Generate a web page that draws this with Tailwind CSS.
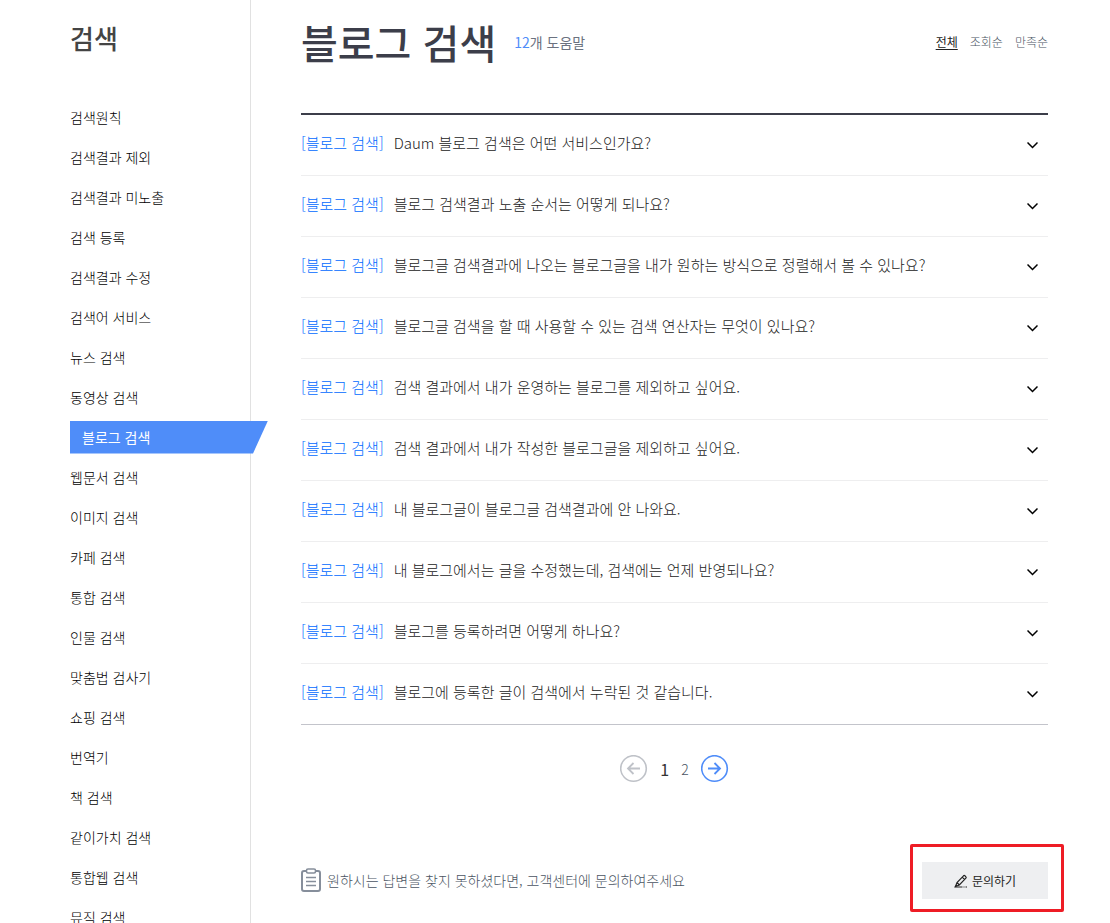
<!DOCTYPE html>
<html lang="ko">
<head>
    <meta charset="UTF-8">
    <meta name="viewport" content="width=device-width, initial-scale=1.0">
    <title>블로그 검색 - 고객센터</title>
    <script src="https://cdn.jsdelivr.net/npm/@tailwindcss/browser@4"></script>
</head>
<body class="bg-white font-['Noto_Sans_CJK_KR',sans-serif] text-[#222]">
    <div class="flex h-screen overflow-hidden">
        <!-- Sidebar -->
        <aside class="w-[251px] shrink-0 border-r border-[#e1e1e1] pl-[70px]">
            <h2 class="pt-5 text-[26px] leading-9 font-medium text-[#444]">검색</h2>
            <nav class="pt-[41px]">
                <ul class="text-sm font-light text-black">
                    <li class="flex h-10 items-center"><a href="#">검색원칙</a></li>
                    <li class="flex h-10 items-center"><a href="#">검색결과 제외</a></li>
                    <li class="flex h-10 items-center"><a href="#">검색결과 미노출</a></li>
                    <li class="flex h-10 items-center"><a href="#">검색 등록</a></li>
                    <li class="flex h-10 items-center"><a href="#">검색결과 수정</a></li>
                    <li class="flex h-10 items-center"><a href="#">검색어 서비스</a></li>
                    <li class="flex h-10 items-center"><a href="#">뉴스 검색</a></li>
                    <li class="flex h-10 items-center"><a href="#">동영상 검색</a></li>
                    <li class="flex h-10 items-center">
                        <a href="#" class="flex h-[33px] w-[198px] shrink-0 items-center bg-[#4f8df9] pl-3 font-normal text-white [clip-path:polygon(0_0,100%_0,183px_100%,0_100%)]">블로그 검색</a>
                    </li>
                    <li class="flex h-10 items-center"><a href="#">웹문서 검색</a></li>
                    <li class="flex h-10 items-center"><a href="#">이미지 검색</a></li>
                    <li class="flex h-10 items-center"><a href="#">카페 검색</a></li>
                    <li class="flex h-10 items-center"><a href="#">통합 검색</a></li>
                    <li class="flex h-10 items-center"><a href="#">인물 검색</a></li>
                    <li class="flex h-10 items-center"><a href="#">맞춤법 검사기</a></li>
                    <li class="flex h-10 items-center"><a href="#">쇼핑 검색</a></li>
                    <li class="flex h-10 items-center"><a href="#">번역기</a></li>
                    <li class="flex h-10 items-center"><a href="#">책 검색</a></li>
                    <li class="flex h-10 items-center"><a href="#">같이가치 검색</a></li>
                    <li class="flex h-10 items-center"><a href="#">통합웹 검색</a></li>
                    <li class="flex h-10 items-center"><a href="#">뮤직 검색</a></li>
                </ul>
            </nav>
        </aside>

        <!-- Content -->
        <main class="min-w-0 flex-1 pr-[62px] pl-[50px]">
            <header class="flex h-[113px] items-start pt-3.5">
                <h1 class="text-[40px] leading-14 font-medium text-[#3c3e4a]">블로그 검색</h1>
                <p class="pt-4 pl-[18px] text-sm leading-6 text-[#6b7280]"><span class="text-[#4f8df9]">12</span>개 도움말</p>
                <div class="ml-auto flex gap-3 pt-4 text-xs leading-6 font-light text-[#4b5563]">
                    <a href="#" class="font-normal text-[#222] underline underline-offset-2">전체</a>
                    <a href="#">조회순</a>
                    <a href="#">만족순</a>
                </div>
            </header>

            <!-- Questions -->
            <ul class="divide-y divide-[#eeeeef] border-t-2 border-b border-t-[#3c3e4a] border-b-[#c3c4cb] text-[15px] font-light">
                <li>
                    <button type="button" class="flex h-15 w-full items-center gap-2.5 pr-2.5 pb-1 text-left">
                        <span class="text-[#006aff]">[블로그 검색]</span>
                        <span>Daum 블로그 검색은 어떤 서비스인가요?</span>
                        <svg class="mt-1 ml-auto h-2 w-[11px]" viewBox="0 0 11 8" fill="none" stroke="#000" stroke-width="1.5"><path d="M.5 1.500 5.500 6.500 10.500 1.500"/></svg>
                    </button>
                </li>
                <li>
                    <button type="button" class="flex h-15 w-full items-center gap-2.5 pr-2.5 pb-1 text-left">
                        <span class="text-[#006aff]">[블로그 검색]</span>
                        <span>블로그 검색결과 노출 순서는 어떻게 되나요?</span>
                        <svg class="mt-1 ml-auto h-2 w-[11px]" viewBox="0 0 11 8" fill="none" stroke="#000" stroke-width="1.5"><path d="M.5 1.500 5.500 6.500 10.500 1.500"/></svg>
                    </button>
                </li>
                <li>
                    <button type="button" class="flex h-15 w-full items-center gap-2.5 pr-2.5 pb-1 text-left">
                        <span class="text-[#006aff]">[블로그 검색]</span>
                        <span>블로그글 검색결과에 나오는 블로그글을 내가 원하는 방식으로 정렬해서 볼 수 있나요?</span>
                        <svg class="mt-1 ml-auto h-2 w-[11px]" viewBox="0 0 11 8" fill="none" stroke="#000" stroke-width="1.5"><path d="M.5 1.500 5.500 6.500 10.500 1.500"/></svg>
                    </button>
                </li>
                <li>
                    <button type="button" class="flex h-15 w-full items-center gap-2.5 pr-2.5 pb-1 text-left">
                        <span class="text-[#006aff]">[블로그 검색]</span>
                        <span>블로그글 검색을 할 때 사용할 수 있는 검색 연산자는 무엇이 있나요?</span>
                        <svg class="mt-1 ml-auto h-2 w-[11px]" viewBox="0 0 11 8" fill="none" stroke="#000" stroke-width="1.5"><path d="M.5 1.500 5.500 6.500 10.500 1.500"/></svg>
                    </button>
                </li>
                <li>
                    <button type="button" class="flex h-15 w-full items-center gap-2.5 pr-2.5 pb-1 text-left">
                        <span class="text-[#006aff]">[블로그 검색]</span>
                        <span>검색 결과에서 내가 운영하는 블로그를 제외하고 싶어요.</span>
                        <svg class="mt-1 ml-auto h-2 w-[11px]" viewBox="0 0 11 8" fill="none" stroke="#000" stroke-width="1.5"><path d="M.5 1.500 5.500 6.500 10.500 1.500"/></svg>
                    </button>
                </li>
                <li>
                    <button type="button" class="flex h-15 w-full items-center gap-2.5 pr-2.5 pb-1 text-left">
                        <span class="text-[#006aff]">[블로그 검색]</span>
                        <span>검색 결과에서 내가 작성한 블로그글을 제외하고 싶어요.</span>
                        <svg class="mt-1 ml-auto h-2 w-[11px]" viewBox="0 0 11 8" fill="none" stroke="#000" stroke-width="1.5"><path d="M.5 1.500 5.500 6.500 10.500 1.500"/></svg>
                    </button>
                </li>
                <li>
                    <button type="button" class="flex h-15 w-full items-center gap-2.5 pr-2.5 pb-1 text-left">
                        <span class="text-[#006aff]">[블로그 검색]</span>
                        <span>내 블로그글이 블로그글 검색결과에 안 나와요.</span>
                        <svg class="mt-1 ml-auto h-2 w-[11px]" viewBox="0 0 11 8" fill="none" stroke="#000" stroke-width="1.5"><path d="M.5 1.500 5.500 6.500 10.500 1.500"/></svg>
                    </button>
                </li>
                <li>
                    <button type="button" class="flex h-15 w-full items-center gap-2.5 pr-2.5 pb-1 text-left">
                        <span class="text-[#006aff]">[블로그 검색]</span>
                        <span>내 블로그에서는 글을 수정했는데, 검색에는 언제 반영되나요?</span>
                        <svg class="mt-1 ml-auto h-2 w-[11px]" viewBox="0 0 11 8" fill="none" stroke="#000" stroke-width="1.5"><path d="M.5 1.500 5.500 6.500 10.500 1.500"/></svg>
                    </button>
                </li>
                <li>
                    <button type="button" class="flex h-15 w-full items-center gap-2.5 pr-2.5 pb-1 text-left">
                        <span class="text-[#006aff]">[블로그 검색]</span>
                        <span>블로그를 등록하려면 어떻게 하나요?</span>
                        <svg class="mt-1 ml-auto h-2 w-[11px]" viewBox="0 0 11 8" fill="none" stroke="#000" stroke-width="1.5"><path d="M.5 1.500 5.500 6.500 10.500 1.500"/></svg>
                    </button>
                </li>
                <li>
                    <button type="button" class="flex h-15 w-full items-center gap-2.5 pr-2.5 pb-1 text-left">
                        <span class="text-[#006aff]">[블로그 검색]</span>
                        <span>블로그에 등록한 글이 검색에서 누락된 것 같습니다.</span>
                        <svg class="mt-1 ml-auto h-2 w-[11px]" viewBox="0 0 11 8" fill="none" stroke="#000" stroke-width="1.5"><path d="M.5 1.500 5.500 6.500 10.500 1.500"/></svg>
                    </button>
                </li>
            </ul>

            <!-- Paging -->
            <nav class="flex items-center justify-center gap-3 pt-[30px] text-base leading-7">
                <button type="button" aria-label="이전">
                    <svg class="block size-7" viewBox="0 0 28 28" fill="none" stroke="#bfc2c8" stroke-width="1.6"><circle cx="13.5" cy="13.5" r="12.8"/><path d="M20 13.500H8.500M13.500 8 8 13.500l5.500 5.500" stroke-width="1.800"/></svg>
                </button>
                <a href="#" class="text-[#333]">1</a>
                <a href="#" class="text-sm font-light text-[#4b5563]">2</a>
                <button type="button" aria-label="다음">
                    <svg class="block size-7" viewBox="0 0 28 28" fill="none" stroke="#4f8df9" stroke-width="1.6"><circle cx="13.5" cy="13.5" r="12.8"/><path d="M7 13.500h11.500M13.500 8 19 13.500 13.500 19" stroke-width="1.800"/></svg>
                </button>
            </nav>

            <!-- Contact -->
            <div class="flex items-center pt-[79px]">
                <svg class="-mt-0.5 h-6 w-5" viewBox="0 0 20 24" fill="none" stroke="#868e9b" stroke-width="2"><path d="M5 3H3a2 2 0 0 0-2 2v16a2 2 0 0 0 2 2h14a2 2 0 0 0 2-2V5a2 2 0 0 0-2-2h-2"/><rect x="5.500" y="1" width="9" height="4" rx="1.500" stroke-width="1.600"/><path d="M5 9.500h10M5 13.500h10M5 17.500h10" stroke-width="1.500"/></svg>
                <p class="-mt-0.5 pl-1.5 text-sm font-light text-[#4b5563]">원하시는 답변을 찾지 못하셨다면, 고객센터에 문의하여주세요</p>
                <div class="relative ml-auto">
                    <button type="button" class="flex h-[37px] w-[126px] items-center justify-center gap-1 bg-[#eeeff1] text-xs text-[#222]">
                        <svg class="size-3.5" viewBox="0 0 14 14" fill="none" stroke="#222" stroke-width="1.200"><path d="M1.500 12.500 3 8.500 9.500 1.800a1 1 0 0 1 1.400 0l1 1a1 1 0 0 1 0 1.400L5.300 11ZM8.200 3.200l2.400 2.400M3 8.500 5.300 11"/><path d="M.5 13h8M9.500 13h1M11.500 13h1.500"/></svg>
                        문의하기
                    </button>
                    <div class="pointer-events-none absolute -top-[18px] -right-4 -bottom-[13px] -left-3 rounded-xs border-3 border-[#ee1c25]"></div>
                </div>
            </div>
        </main>
    </div>
</body>
</html>
